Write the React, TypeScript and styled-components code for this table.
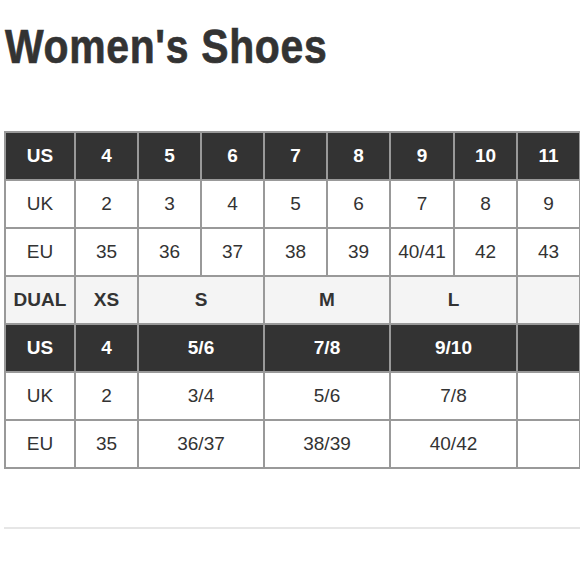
import React from "react";
import styled, { createGlobalStyle } from "styled-components";

const GlobalStyle = createGlobalStyle`
  html, body { margin: 0; padding: 0; background: #ffffff; }
  body { font-family: "Liberation Sans", Arial, sans-serif; }
`;

const Page = styled.div`
  width: 580px;
  height: 580px;
  box-sizing: border-box;
  padding: 21px 0 0 4px;
  display: flex;
  flex-direction: column;
  align-items: flex-start;
  background: #fff;
`;

const Title = styled.h1`
  margin: 0 0 0 1px;
  font-family: "Liberation Sans", Arial, sans-serif;
  font-weight: 700;
  font-size: 49px;
  line-height: 50px;
  letter-spacing: 0.8px;
  color: #333333;
  -webkit-text-stroke: 0.7px #333333;
  transform: scaleX(0.835);
  transform-origin: left center;
  white-space: nowrap;
`;

const SizeTable = styled.table`
  margin-top: 60px;
  width: 575px;
  border-collapse: collapse;
  table-layout: fixed;
`;

const Col = styled.col<{ $w: number }>`
  width: ${(p) => p.$w}px;
`;

const Row = styled.tr`
  height: 48px;
`;

type Tone = "dark" | "light" | "white";

const Cell = styled.td<{ $tone: Tone }>`
  border: 2px solid #999999;
  padding: 0;
  text-align: center;
  vertical-align: middle;
  font-family: "Liberation Sans", Arial, sans-serif;
  font-size: 19px;
  font-weight: ${(p) => (p.$tone === "white" ? 400 : 700)};
  color: ${(p) => (p.$tone === "dark" ? "#ffffff" : "#333333")};
  background: ${(p) =>
    p.$tone === "dark" ? "#333333" : p.$tone === "light" ? "#f4f4f4" : "#ffffff"};
`;

const Divider = styled.hr`
  margin: 58px 0 0 0;
  width: 576px;
  border: none;
  border-top: 2px solid #e6e6e6;
`;

type C = [string, number?];
const rows: { tone: Tone; cells: C[] }[] = [
  { tone: "dark", cells: [["US"], ["4"], ["5"], ["6"], ["7"], ["8"], ["9"], ["10"], ["11"]] },
  { tone: "white", cells: [["UK"], ["2"], ["3"], ["4"], ["5"], ["6"], ["7"], ["8"], ["9"]] },
  { tone: "white", cells: [["EU"], ["35"], ["36"], ["37"], ["38"], ["39"], ["40/41"], ["42"], ["43"]] },
  { tone: "light", cells: [["DUAL"], ["XS"], ["S", 2], ["M", 2], ["L", 2], [""]] },
  { tone: "dark", cells: [["US"], ["4"], ["5/6", 2], ["7/8", 2], ["9/10", 2], [""]] },
  { tone: "white", cells: [["UK"], ["2"], ["3/4", 2], ["5/6", 2], ["7/8", 2], [""]] },
  { tone: "white", cells: [["EU"], ["35"], ["36/37", 2], ["38/39", 2], ["40/42", 2], [""]] },
];

const widths = [70, 63, 63, 63, 63, 63, 64, 63, 63];

export default function App() {
  return (
    <>
      <GlobalStyle />
      <Page>
        <Title>Women's Shoes</Title>
        <SizeTable>
          <colgroup>
            {widths.map((w, i) => (
              <Col key={i} $w={w} />
            ))}
          </colgroup>
          <tbody>
            {rows.map((r, ri) => (
              <Row key={ri}>
                {r.cells.map(([t, span], ci) => (
                  <Cell key={ci} $tone={r.tone} colSpan={span ?? 1}>
                    {t}
                  </Cell>
                ))}
              </Row>
            ))}
          </tbody>
        </SizeTable>
        <Divider />
      </Page>
    </>
  );
}
